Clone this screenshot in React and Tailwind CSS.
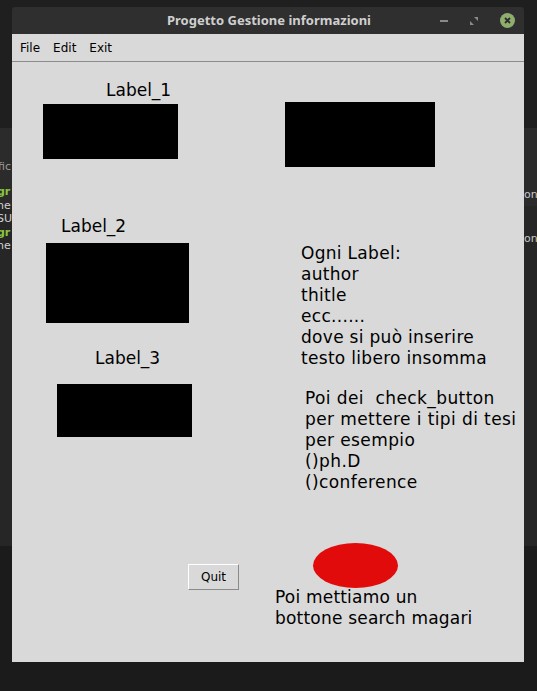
import React from "react";

const sans = "font-['DejaVu_Sans',sans-serif]";

const App = () => {
  return (
    <div className="relative w-[537px] h-[691px] overflow-hidden bg-[#1f1f1f]">
      {/* desktop behind the window */}
      <div className="absolute left-0 top-[128px] w-full h-[78px] bg-[#2b2b2b]" />
      <div className="absolute left-0 top-[206px] w-full h-[340px] bg-[#262626]" />
      <div className="absolute left-0 top-[546px] w-full h-[145px] bg-[#1b1b1b]" />
      <div className={`absolute left-[-2px] top-[160px] text-[11px] leading-[13px] text-[#9a9a9a] ${sans}`}>fic</div>
      <div className={`absolute left-[-3px] top-[185px] text-[11px] leading-[13.5px] font-bold ${sans}`}>
        <div className="text-[#8ac43f]">gr</div>
        <div className="text-[#d0d0d0] font-normal">he</div>
        <div className="text-[#d0d0d0] font-normal">SU</div>
        <div className="text-[#8ac43f]">gr</div>
        <div className="text-[#d0d0d0] font-normal">he</div>
      </div>
      <div className={`absolute left-[524px] top-[187px] text-[11px] text-[#c8c8c8] ${sans}`}>on</div>
      <div className={`absolute left-[524px] top-[231px] text-[11px] text-[#c8c8c8] ${sans}`}>on</div>

      {/* window */}
      <div className="relative ml-[12px] mt-[7px] w-[512px] flex flex-col">
        <div className="h-[27px] bg-[#2f2f2f] rounded-t-[3px] flex items-center relative">
          <div className="flex-1 text-center text-[13px] font-bold text-[#cfcfcf] font-['Noto_Sans',sans-serif] pl-[2px]">
            Progetto Gestione informazioni
          </div>
          <div className="absolute right-[9px] top-[6px] flex items-center">
            <div className="w-[8px] h-[2px] bg-[#8a8a8a]" />
            <svg width="8" height="8" viewBox="0 0 8 8" className="ml-[22px]">
              <path d="M4 0 L8 0 L8 4 Z M0 4 L0 8 L4 8 Z" fill="#8a8a8a" />
            </svg>
            <div className="ml-[22px] w-[15px] h-[15px] rounded-full bg-[#8fae6e] flex items-center justify-center">
              <svg width="7" height="7" viewBox="0 0 7 7">
                <path d="M1 1 L6 6 M6 1 L1 6" stroke="#2b2b2b" strokeWidth="1.8" />
              </svg>
            </div>
          </div>
        </div>

        <div className={`h-[28px] bg-[#d9d9d9] border-b border-[#8c8c8c] flex items-center gap-[13px] pl-[8px] text-[12px] text-black ${sans}`}>
          <span>File</span>
          <span>Edit</span>
          <span>Exit</span>
        </div>

        <div className={`h-[600px] bg-[#d9d9d9] flex text-black ${sans}`}>
          {/* left column */}
          <div className="w-[263px] flex flex-col items-start">
            <div className="ml-[94px] mt-[18px] text-[17px] leading-[20px]">Label_1</div>
            <div className="ml-[31px] mt-[4px] w-[135px] h-[55px] bg-black" />
            <div className="ml-[49px] mt-[57px] text-[17px] leading-[20px]">Label_2</div>
            <div className="ml-[34px] mt-[7px] w-[143px] h-[80px] bg-black" />
            <div className="ml-[83px] mt-[25px] text-[17px] leading-[20px]">Label_3</div>
            <div className="ml-[45px] mt-[16px] w-[135px] h-[53px] bg-black" />
            <button className="ml-[176px] mt-[127px] w-[51px] h-[26px] border border-t-white border-l-white border-r-[#8a8a8a] border-b-[#8a8a8a] text-[12px] bg-[#d9d9d9] flex items-center justify-center">
              Quit
            </button>
          </div>

          {/* right column */}
          <div className="flex flex-col items-start">
            <div className="ml-[10px] mt-[40px] w-[150px] h-[65px] bg-black" />
            <div className="ml-[26px] mt-[76px] text-[17px] leading-[21px] tracking-[0.3px]">
              <div>Ogni Label:</div>
              <div>author</div>
              <div>thitle</div>
              <div>ecc......</div>
              <div>dove si può inserire</div>
              <div>testo libero insomma</div>
            </div>
            <div className="ml-[30px] mt-[19px] text-[17px] leading-[21px] tracking-[0.4px]">
              <div className="whitespace-pre">Poi dei  check_button</div>
              <div>per mettere i tipi di tesi</div>
              <div>per esempio</div>
              <div>()ph.D</div>
              <div>()conference</div>
            </div>
            <div className="ml-[38px] mt-[50px] w-[85px] h-[45px] rounded-[50%] bg-[#e20b0b]" />
            <div className="-mt-[1px] text-[17px] leading-[21px] tracking-[0.2px]">
              <div>Poi mettiamo un</div>
              <div>bottone search magari</div>
            </div>
          </div>
        </div>
      </div>
    </div>
  );
};

export default App;
